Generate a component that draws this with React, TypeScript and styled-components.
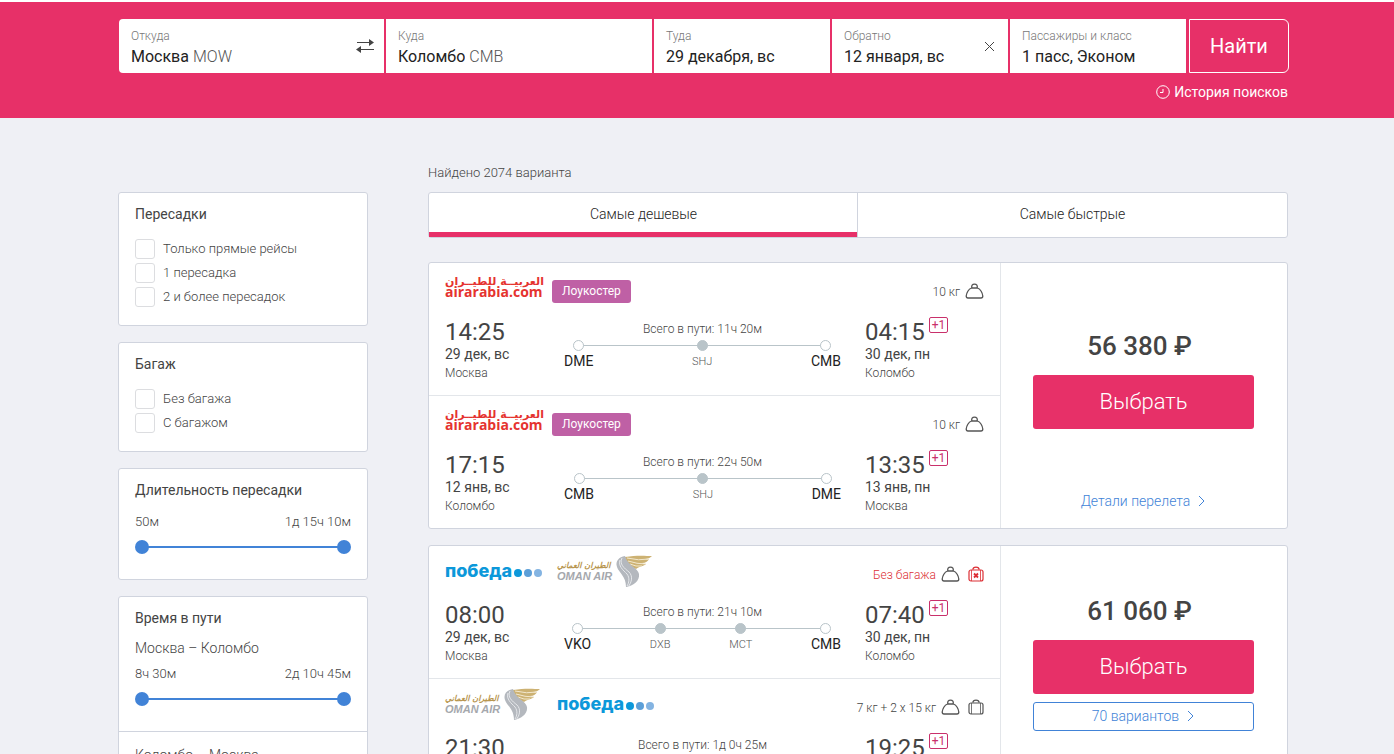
import React from "react";
import styled, { createGlobalStyle, css } from "styled-components";

const pink = "#e73068";
const blue = "#4183d7";
const edge = "#d0d4de";

const GlobalStyle = createGlobalStyle`
  *, *::before, *::after { box-sizing: border-box; }
  body {
    margin: 0;
    background: #eff0f5;
    color: #444;
    font-family: Roboto, "Liberation Sans", sans-serif;
    font-size: 14px;
    line-height: 20px;
  }
  button, input { font: inherit; color: inherit; }
  button { cursor: pointer; }
  a { color: inherit; text-decoration: none; }
  svg { display: block; flex: none; }
  h2, h3, p, ol { margin: 0; padding: 0; font: inherit; }
`;

const Container = styled.div`
  max-width: 1182px;
  margin: 0 auto;
  padding-left: 12px;
`;

/* ---------- Search header ---------- */

const Header = styled.header`
  border-top: 2px solid #fff;
  background: ${pink};
  padding: 17px 0 16px;
`;

const SearchForm = styled.form`
  display: grid;
  grid-template-columns: minmax(0, 265fr) minmax(0, 266fr) repeat(3, minmax(0, 176fr)) 101px;
  gap: 2px;
  margin: 0 -1px 0 1px;
`;

const Field = styled.div`
  display: flex;
  align-items: center;
  height: 54px;
  padding: 0 10px 0 12px;
  background: #fff;
  &:first-child { border-radius: 4px 0 0 4px; }
`;

const FieldBody = styled.div`
  align-self: flex-start;
  flex: 1;
  min-width: 0;
  padding-top: 9px;
`;

const FieldLabel = styled.label`
  display: block;
  font-size: 12px;
  font-weight: 300;
  line-height: 16px;
  color: #777;
`;

const FieldValue = styled.div`
  display: flex;
  gap: 4px;
  margin-top: 1px;
  font-size: 16px;
  line-height: 24px;
  color: #222;
`;

const FieldInput = styled.input<{ $fit?: boolean }>`
  height: 24px;
  min-width: 0;
  padding: 0;
  border: 0;
  outline: 0;
  background: none;
  ${(p) => (p.$fit ? css`field-sizing: content;` : css`width: 100%;`)}
`;

const CityCode = styled.span`
  font-weight: 300;
  color: #555;
`;

const IconButton = styled.button`
  display: flex;
  padding: 0;
  border: 0;
  background: none;
  color: #444;
`;

const ClearButton = styled(IconButton)`
  margin-right: 3px;
`;

const FindButton = styled.button`
  margin-left: 1px;
  padding: 0;
  border: 1px solid #fff;
  border-radius: 0 6px 6px 0;
  background: none;
  color: #fff;
  font-size: 20px;
`;

const HistoryRow = styled.div`
  display: flex;
  justify-content: flex-end;
  padding-top: 9px;
`;

const HistoryLink = styled.a`
  display: flex;
  align-items: center;
  gap: 4px;
  color: #fff;
`;

/* ---------- Page columns ---------- */

const Columns = styled(Container)`
  display: grid;
  grid-template-columns: 250px minmax(0, 1fr);
  gap: 60px;
  padding-top: 45px;
  padding-bottom: 40px;
`;

const Sidebar = styled.aside`
  display: flex;
  flex-direction: column;
  gap: 16px;
  padding-top: 29px;
`;

const Panel = styled.section`
  border: 1px solid ${edge};
  border-radius: 3px;
  background: #fff;
`;

const PanelPart = styled.div<{ $range?: boolean }>`
  padding: 11px 16px ${(p) => (p.$range ? 25 : 16)}px;
  & + & { border-top: 1px solid ${edge}; }
`;

const PanelTitle = styled.h2`
  line-height: 20px;
`;

const Options = styled.div`
  margin-top: 13px;
`;

const Option = styled.label`
  display: flex;
  align-items: center;
  gap: 8px;
  height: 24px;
  font-size: 13px;
  font-weight: 300;
`;

const Tick = styled.input`
  appearance: none;
  width: 20px;
  height: 20px;
  margin: 0;
  border: 1px solid #dcdde0;
  border-radius: 3px;
  background: #fff;
  &:checked { background: ${blue}; }
`;

const Direction = styled.h3`
  font-weight: 300;
  margin-top: 10px;
  ${PanelPart} > &:first-child { margin-top: 2px; }
`;

const RangeValues = styled.div<{ $near?: boolean }>`
  display: flex;
  justify-content: space-between;
  margin-top: ${(p) => (p.$near ? 6 : 12)}px;
  font-size: 13px;
  font-weight: 300;
`;

const RangeTrack = styled.div`
  display: grid;
  margin-top: 8px;
  height: 14px;
  background: linear-gradient(${blue}, ${blue}) center / calc(100% - 8px) 2px no-repeat;
`;

const RangeInput = styled.input`
  grid-area: 1 / 1;
  appearance: none;
  width: 100%;
  height: 14px;
  margin: 0;
  background: none;
  pointer-events: none;
  &::-webkit-slider-thumb {
    appearance: none;
    width: 14px;
    height: 14px;
    border-radius: 50%;
    background: ${blue};
    pointer-events: auto;
  }
`;

/* ---------- Results ---------- */

const Found = styled.p`
  font-size: 13px;
  font-weight: 300;
`;

const Tabs = styled.div`
  display: grid;
  grid-template-columns: 1fr 1fr;
  height: 46px;
  margin: 9px 0 24px;
  border: 1px solid ${edge};
  border-radius: 3px;
  background: #fff;
`;

const Tab = styled.button<{ $active?: boolean }>`
  padding: 2px 0 0;
  border: 0;
  border-bottom: 5px solid ${(p) => (p.$active ? pink : "transparent")};
  background: none;
  color: #222;
  font-weight: 300;
  & + & { box-shadow: -1px 0 ${edge}; }
`;

const Ticket = styled.article`
  display: grid;
  grid-template-columns: minmax(0, 1fr) 287px;
  margin-bottom: 16px;
  border: 1px solid ${edge};
  border-radius: 3px;
  background: #fff;
`;

const Leg = styled.section`
  padding: 0 16px 14px;
  & + & { border-top: 1px solid #e3e6ea; }
`;

const LegHead = styled.div`
  display: flex;
  align-items: center;
  height: 57px;
`;

const Carriers = styled.div`
  display: flex;
  align-items: center;
  flex: 1;
`;

const LowCost = styled.span`
  height: 23px;
  margin-left: 10px;
  padding: 0 10px;
  border-radius: 3px;
  background: #bf60a5;
  color: #fff;
  font-size: 12px;
  line-height: 23px;
`;

const Luggage = styled.div<{ $none?: boolean }>`
  display: flex;
  align-items: center;
  color: ${(p) => (p.$none ? "#dc2f35" : "#444")};
  font-size: 12px;
  font-weight: 300;
`;

const LuggageIcon = styled.span<{ $alert?: boolean; $apart?: boolean }>`
  margin-left: ${(p) => (p.$apart ? 8 : 5)}px;
  padding-bottom: 2px;
  color: ${(p) => (p.$alert ? "#dc2f35" : "#555")};
`;

const LegBody = styled.div`
  display: grid;
  grid-template-columns: 119px minmax(0, 1fr) 119px;
`;

const TimeRow = styled.div`
  display: flex;
  align-items: flex-start;
  gap: 4px;
  height: 24px;
`;

const Time = styled.time`
  font-size: 24px;
  line-height: 24px;
`;

const NextDay = styled.span`
  height: 16px;
  margin-top: -3px;
  padding: 0 2px;
  border: 1px solid #c9306b;
  border-radius: 2px;
  color: #c9306b;
  font-size: 12px;
  line-height: 14px;
`;

const City = styled.p`
  margin-top: 1px;
  font-size: 12px;
  font-weight: 300;
  line-height: 16px;
`;

const Route = styled.div`
  margin-right: 24px;
`;

const Total = styled.p`
  font-size: 12px;
  font-weight: 300;
  line-height: 18px;
  text-align: center;
`;

const Stops = styled.ol`
  position: relative;
  display: flex;
  justify-content: space-between;
  margin-top: 2px;
  list-style: none;
  &::before {
    content: "";
    position: absolute;
    inset: 5px 15px auto;
    height: 1px;
    background: #b9c4c9;
  }
`;

const Stop = styled.li<{ $middle?: boolean }>`
  position: relative;
  display: flex;
  flex-direction: column;
  align-items: center;
  color: ${(p) => (p.$middle ? "#555" : "#222")};
  font-size: ${(p) => (p.$middle ? 11 : 14)}px;
  font-weight: ${(p) => (p.$middle ? 300 : 400)};
  line-height: ${(p) => (p.$middle ? 22 : 20)}px;
  &::before {
    content: "";
    width: 11px;
    height: 11px;
    border: 1px solid #b9c4c9;
    border-radius: 50%;
    background: ${(p) => (p.$middle ? "#b9c4c9" : "#fff")};
  }
`;

const Offer = styled.div`
  display: flex;
  flex-direction: column;
  padding: 3px 33px 17px 32px;
  border-left: 1px solid #e3e6ea;
`;

const OfferMain = styled.div`
  display: flex;
  flex: 1;
  flex-direction: column;
  justify-content: center;
`;

const Price = styled.p`
  padding-right: 8px;
  font-size: 26px;
  font-weight: 500;
  line-height: 36px;
  text-align: center;
`;

const ChooseButton = styled.button`
  height: 54px;
  margin-top: 11px;
  border: 0;
  border-radius: 3px;
  background: ${pink};
  color: #fff;
  font-size: 22px;
  font-weight: 300;
`;

const VariantsButton = styled.button`
  display: flex;
  align-items: center;
  justify-content: center;
  gap: 8px;
  height: 29px;
  margin-top: 8px;
  padding: 0;
  border: 1px solid ${blue};
  border-radius: 3px;
  background: #fff;
  color: ${blue};
  font-weight: 300;
`;

const DetailsLink = styled.a`
  display: flex;
  align-items: center;
  justify-content: center;
  gap: 8px;
  color: ${blue};
  font-weight: 300;
`;

/* ---------- Carrier logos ---------- */

const AirArabia = styled.div`
  display: flex;
  flex-direction: column;
  width: 97px;
  margin-bottom: 9px;
  color: #e5332f;
  font-weight: 700;
  white-space: nowrap;
`;

const AirArabiaArabic = styled.span`
  font-family: "DejaVu Sans", sans-serif;
  font-size: 11px;
  line-height: 10px;
  text-align: center;
`;

const AirArabiaLatin = styled.span`
  font-family: "Open Sans", "Noto Sans", sans-serif;
  font-size: 14px;
  line-height: 10px;
`;

const Pobeda = styled.div`
  display: flex;
  align-items: center;
  justify-content: space-between;
  width: 97px;
  margin-right: 15px;
  margin-bottom: 8px;
  color: #0c98da;
  font-family: Inter, "Open Sans", sans-serif;
  font-size: 18px;
  font-weight: 800;
`;

const PobedaDots = styled.svg`
  margin-top: 4px;
`;

const OmanAir = styled.div`
  display: flex;
  align-items: center;
  width: 97px;
  margin-right: 15px;
  margin-bottom: 8px;
  white-space: nowrap;
`;

const OmanNames = styled.div`
  display: flex;
  flex-direction: column;
  width: 58px;
  font-style: italic;
`;

const OmanArabic = styled.span`
  color: #b8964f;
  font-family: "DejaVu Sans", sans-serif;
  font-size: 8px;
  font-weight: 700;
  line-height: 11px;
`;

const OmanLatin = styled.span`
  color: #a5a8ad;
  font-family: "Liberation Sans", sans-serif;
  font-size: 11px;
  font-weight: 700;
  line-height: 11px;
`;

function AirArabiaLogo() {
  return (
    <AirArabia>
      <AirArabiaArabic lang="ar">العربيــة للطيــران</AirArabiaArabic>
      <AirArabiaLatin>airarabia.com</AirArabiaLatin>
    </AirArabia>
  );
}

function PobedaLogo() {
  return (
    <Pobeda>
      победа
      <PobedaDots width="28" height="8" viewBox="0 0 28 8">
        <circle cx="4" cy="4" r="4" fill="#0c98da" />
        <circle cx="14" cy="4" r="4" fill="#5c9fd8" />
        <circle cx="24" cy="4" r="4" fill="#84b4e2" />
      </PobedaDots>
    </Pobeda>
  );
}

function OmanAirLogo() {
  return (
    <OmanAir>
      <OmanNames>
        <OmanArabic lang="ar">الطيران العماني</OmanArabic>
        <OmanLatin>OMAN AIR</OmanLatin>
      </OmanNames>
      <svg width="38" height="32" viewBox="0 0 38 32">
        <path d="M37 1C31 1 22 0 10 2C8 6 12 10 21 14C25 11 29 11 31 9C29 9 28 9 27 8C31 8 33 6 34 4C32 5 31 4 30 4C33 4 35 3 37 1Z" fill="#cdb273" />
        <path d="M12 3Q24 6 34 4M13 6Q22 9 31 9M15 9Q21 12 27 11" fill="none" stroke="#f2e8cf" strokeWidth="1" />
        <path d="M10 1C4 2 0 6 2 12C4 18 11 21 11 32C18 31 25 26 24 19C23 13 13 11 10 1Z" fill="#b4b8be" />
        <path d="M7 3C4 9 9 13 14 17C18 21 17 27 13 32M5 5C3 11 8 15 12 19C15 23 14 28 12 31" fill="none" stroke="#e6e8eb" strokeWidth="1" />
      </svg>
    </OmanAir>
  );
}

/* ---------- Icons ---------- */

const SwapIcon = () => (
  <svg width="18" height="16" viewBox="0 0 18 16" stroke="currentColor" fill="none" strokeWidth="1">
    <path d="M1 4.500H14M4 11.500H18" />
    <path d="M13 1L18 4.500L13 8ZM5 8L0 11.500L5 15Z" fill="currentColor" stroke="none" />
  </svg>
);

const CrossIcon = () => (
  <svg width="11" height="11" viewBox="0 0 11 11" stroke="currentColor" fill="none">
    <path d="M1 1L10 10M10 1L1 10" />
  </svg>
);

const ClockIcon = () => (
  <svg width="14" height="14" viewBox="0 0 14 14" stroke="currentColor" fill="none">
    <circle cx="7" cy="7" r="6.300" />
    <path d="M7 4V7.500H4" />
  </svg>
);

const ChevronIcon = () => (
  <svg width="8" height="12" viewBox="0 0 8 12" stroke="currentColor" fill="none">
    <path d="M1 1L6 6L1 11" />
  </svg>
);

const WeightIcon = () => (
  <svg width="19" height="16" viewBox="0 0 19 16" stroke="currentColor" fill="none" strokeWidth="1.300">
    <path d="M6.500 5H12.500C15.500 6 17.500 10 17.800 13Q17.800 15 16 15H3Q1.200 15 1.200 13C1.500 10 3.500 6 6.500 5Z" />
    <path d="M7 5C6 2.500 7.500 1.200 9.500 1.200S13 2.500 12 5" />
  </svg>
);

const CaseIcon = ({ crossed }: { crossed?: boolean }) => (
  <svg width="16" height="16" viewBox="0 0 16 16" stroke="currentColor" fill="none" strokeWidth="1.200">
    <rect x="1" y="4" width="14" height="11" rx="2" />
    <path d="M3.500 4V15M12.500 4V15" strokeWidth="0.800" />
    <path d="M4.800 3.600Q5 1.200 8 1.200T11.200 3.600" />
    {crossed && <path d="M6 7.500L10 11.500M10 7.500L6 11.500" strokeWidth="1.800" />}
  </svg>
);

/* ---------- Data ---------- */

type Carrier = "arabia" | "pobeda" | "oman";

interface LegData {
  carriers: Carrier[];
  lowCost?: boolean;
  luggage: string;
  suitcase?: "yes" | "no";
  total: string;
  stops: string[];
  from: [string, string, string];
  to: [string, string, string];
}

interface TicketData {
  price: string;
  variants?: string;
  legs: LegData[];
}

const tickets: TicketData[] = [
  {
    price: "56 380 ₽",
    legs: [
      {
        carriers: ["arabia"], lowCost: true, luggage: "10 кг", total: "11ч 20м",
        stops: ["DME", "SHJ", "CMB"],
        from: ["14:25", "29 дек, вс", "Москва"], to: ["04:15", "30 дек, пн", "Коломбо"],
      },
      {
        carriers: ["arabia"], lowCost: true, luggage: "10 кг", total: "22ч 50м",
        stops: ["CMB", "SHJ", "DME"],
        from: ["17:15", "12 янв, вс", "Коломбо"], to: ["13:35", "13 янв, пн", "Москва"],
      },
    ],
  },
  {
    price: "61 060 ₽",
    variants: "70 вариантов",
    legs: [
      {
        carriers: ["pobeda", "oman"], luggage: "Без багажа", suitcase: "no", total: "21ч 10м",
        stops: ["VKO", "DXB", "MCT", "CMB"],
        from: ["08:00", "29 дек, вс", "Москва"], to: ["07:40", "30 дек, пн", "Коломбо"],
      },
      {
        carriers: ["oman", "pobeda"], luggage: "7 кг + 2 x 15 кг", suitcase: "yes", total: "1д 0ч 25м",
        stops: ["CMB", "MCT", "DXB", "VKO"],
        from: ["21:30", "12 янв, вс", "Коломбо"], to: ["19:25", "13 янв, пн", "Москва"],
      },
    ],
  },
];

const logos: Record<Carrier, () => React.JSX.Element> = {
  arabia: AirArabiaLogo,
  pobeda: PobedaLogo,
  oman: OmanAirLogo,
};

/* ---------- Composed parts ---------- */

interface SearchFieldProps {
  id: string;
  label: string;
  value: string;
  code?: string;
  action?: React.ReactNode;
}

function SearchField({ id, label, value, code, action }: SearchFieldProps) {
  return (
    <Field>
      <FieldBody>
        <FieldLabel htmlFor={id}>{label}</FieldLabel>
        <FieldValue>
          <FieldInput id={id} defaultValue={value} $fit={Boolean(code)} />
          {code && <CityCode>{code}</CityCode>}
        </FieldValue>
      </FieldBody>
      {action}
    </Field>
  );
}

function CheckPanel({ title, options }: { title: string; options: string[] }) {
  return (
    <Panel>
      <PanelPart>
        <PanelTitle>{title}</PanelTitle>
        <Options>
          {options.map((text) => (
            <Option key={text}>
              <Tick type="checkbox" />
              {text}
            </Option>
          ))}
        </Options>
      </PanelPart>
    </Panel>
  );
}

function Range({ name, low, high, near }: { name: string; low: string; high: string; near?: boolean }) {
  return (
    <>
      <RangeValues $near={near}>
        <span>{low}</span>
        <span>{high}</span>
      </RangeValues>
      <RangeTrack>
        <RangeInput type="range" aria-label={`${name}: от`} defaultValue={0} />
        <RangeInput type="range" aria-label={`${name}: до`} defaultValue={100} />
      </RangeTrack>
    </>
  );
}

function LegView({ leg }: { leg: LegData }) {
  const last = leg.stops.length - 1;
  return (
    <Leg>
      <LegHead>
        <Carriers>
          {leg.carriers.map((name) => {
            const Logo = logos[name];
            return <Logo key={name} />;
          })}
          {leg.lowCost && <LowCost>Лоукостер</LowCost>}
        </Carriers>
        <Luggage $none={leg.suitcase === "no"}>
          {leg.luggage}
          <LuggageIcon><WeightIcon /></LuggageIcon>
          {leg.suitcase && (
            <LuggageIcon $apart $alert={leg.suitcase === "no"}>
              <CaseIcon crossed={leg.suitcase === "no"} />
            </LuggageIcon>
          )}
        </Luggage>
      </LegHead>
      <LegBody>
        <div>
          <TimeRow><Time>{leg.from[0]}</Time></TimeRow>
          <p>{leg.from[1]}</p>
          <City>{leg.from[2]}</City>
        </div>
        <Route>
          <Total>Всего в пути: {leg.total}</Total>
          <Stops>
            {leg.stops.map((code, i) => (
              <Stop key={code} $middle={i > 0 && i < last}>{code}</Stop>
            ))}
          </Stops>
        </Route>
        <div>
          <TimeRow>
            <Time>{leg.to[0]}</Time>
            <NextDay>+1</NextDay>
          </TimeRow>
          <p>{leg.to[1]}</p>
          <City>{leg.to[2]}</City>
        </div>
      </LegBody>
    </Leg>
  );
}

export default function App() {
  return (
    <>
      <GlobalStyle />
      <Header>
        <Container>
          <SearchForm onSubmit={(e) => e.preventDefault()}>
            <SearchField
              id="from" label="Откуда" value="Москва" code="MOW"
              action={<IconButton type="button" aria-label="Поменять местами"><SwapIcon /></IconButton>}
            />
            <SearchField id="to" label="Куда" value="Коломбо" code="CMB" />
            <SearchField id="depart" label="Туда" value="29 декабря, вс" />
            <SearchField
              id="return" label="Обратно" value="12 января, вс"
              action={<ClearButton type="button" aria-label="Очистить"><CrossIcon /></ClearButton>}
            />
            <SearchField id="people" label="Пассажиры и класс" value="1 пасс, Эконом" />
            <FindButton type="submit">Найти</FindButton>
          </SearchForm>
          <HistoryRow>
            <HistoryLink href="#history"><ClockIcon />История поисков</HistoryLink>
          </HistoryRow>
        </Container>
      </Header>
      <Columns as="main">
        <Sidebar>
          <CheckPanel title="Пересадки" options={["Только прямые рейсы", "1 пересадка", "2 и более пересадок"]} />
          <CheckPanel title="Багаж" options={["Без багажа", "С багажом"]} />
          <Panel>
            <PanelPart $range>
              <PanelTitle>Длительность пересадки</PanelTitle>
              <Range name="Длительность пересадки" low="50м" high="1д 15ч 10м" />
            </PanelPart>
          </Panel>
          <Panel>
            <PanelPart $range>
              <PanelTitle>Время в пути</PanelTitle>
              <Direction>Москва – Коломбо</Direction>
              <Range near name="Москва – Коломбо" low="8ч 30м" high="2д 10ч 45м" />
            </PanelPart>
            <PanelPart $range>
              <Direction>Коломбо – Москва</Direction>
              <Range near name="Коломбо – Москва" low="8ч 30м" high="2д 10ч 45м" />
            </PanelPart>
          </Panel>
        </Sidebar>
        <div>
          <Found>Найдено 2074 варианта</Found>
          <Tabs>
            <Tab $active type="button">Самые дешевые</Tab>
            <Tab type="button">Самые быстрые</Tab>
          </Tabs>
          {tickets.map((ticket) => (
            <Ticket key={ticket.price}>
              <div>
                {ticket.legs.map((leg) => (
                  <LegView key={leg.from[0]} leg={leg} />
                ))}
              </div>
              <Offer>
                <OfferMain>
                  <Price>{ticket.price}</Price>
                  <ChooseButton type="button">Выбрать</ChooseButton>
                  {ticket.variants && (
                    <VariantsButton type="button">{ticket.variants}<ChevronIcon /></VariantsButton>
                  )}
                </OfferMain>
                <DetailsLink href="#details">Детали перелета<ChevronIcon /></DetailsLink>
              </Offer>
            </Ticket>
          ))}
        </div>
      </Columns>
    </>
  );
}
